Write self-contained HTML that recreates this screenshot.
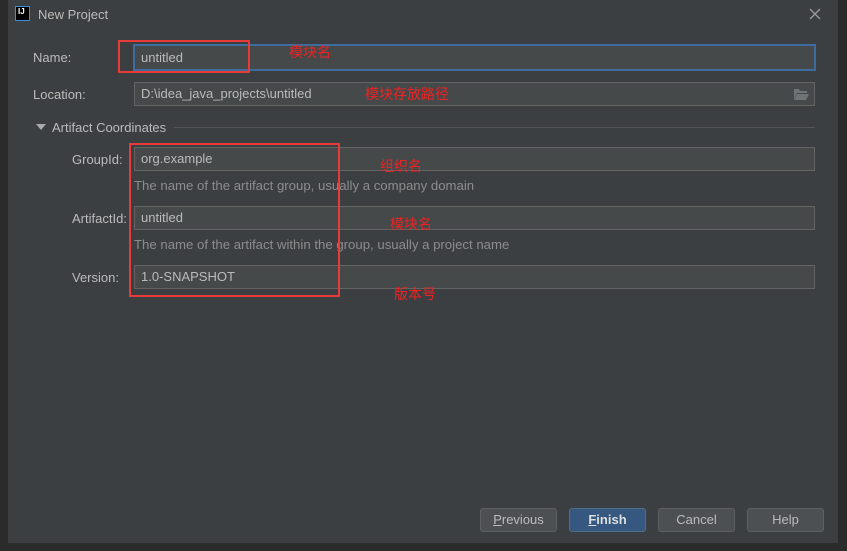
<!DOCTYPE html>
<html><head><meta charset="utf-8"><style>
body{margin:0;width:847px;height:551px;background:#2b2b2b;position:relative;overflow:hidden;font-family:"Liberation Sans","Noto Sans CJK SC",sans-serif;font-size:13px;color:#bbbbbb}
.dlg{position:absolute;left:8px;top:0;width:830px;height:543px;background:#3c3f41}
.a{position:absolute}
.f{position:absolute;background:#45494a;border:1px solid #646464;box-sizing:border-box;padding-left:6px;line-height:22px;color:#bbbbbb}
.lab{position:absolute;color:#bbbbbb}
.hint{position:absolute;color:#8c8c8c;font-size:13.2px}
.red{position:absolute;border:2px solid #e83a3a;box-sizing:border-box}
.rt{position:absolute;color:#ee2222;font-size:14px}
.btn{position:absolute;top:508px;width:77px;height:24px;box-sizing:border-box;border:1px solid #5e6060;border-radius:3px;background:#4c5052;text-align:center;line-height:22px;color:#bbbbbb}
</style></head><body>
<div class="dlg"></div>
<div class="a" style="left:15px;top:6px;width:15px;height:15px;background:#000;border:1px solid #3d8fe0;box-sizing:border-box;color:#fff;font-size:8px;font-weight:bold;line-height:9px;padding-left:2px">IJ</div>
<div class="a" style="left:38px;top:7px;font-size:13px;color:#bbbbbb">New Project</div>
<svg class="a" style="left:809px;top:8px" width="12" height="12"><path d="M1 1L11 11M11 1L1 11" stroke="#9a9a9a" stroke-width="1.3"/></svg>

<div class="lab" style="left:33px;top:50px">Name:</div>
<div class="f" style="left:133px;top:44px;width:683px;height:27px;border:2px solid #3d6c9e;line-height:23px">untitled</div>
<div class="lab" style="left:33px;top:87px">Location:</div>
<div class="f" style="left:134px;top:82px;width:681px;height:24px">D:\idea_java_projects\untitled</div>
<svg class="a" style="left:794px;top:88px" width="15" height="12"><path d="M0 1h5l1 2h7v2H3L0 11z" fill="#6e7376"/><path d="M3 6h12l-3 6H0z" fill="#6e7376"/></svg>

<div class="a" style="left:36px;top:124px;width:0;height:0;border-left:5px solid transparent;border-right:5px solid transparent;border-top:6px solid #aaa"></div>
<div class="lab" style="left:52px;top:120px">Artifact Coordinates</div>
<div class="a" style="left:174px;top:127px;width:641px;height:1px;background:#555"></div>

<div class="lab" style="left:72px;top:152px">GroupId:</div>
<div class="f" style="left:134px;top:147px;width:681px;height:24px">org.example</div>
<div class="hint" style="left:134px;top:178px">The name of the artifact group, usually a company domain</div>
<div class="lab" style="left:72px;top:211px">ArtifactId:</div>
<div class="f" style="left:134px;top:206px;width:681px;height:24px">untitled</div>
<div class="hint" style="left:134px;top:237px">The name of the artifact within the group, usually a project name</div>
<div class="lab" style="left:72px;top:270px">Version:</div>
<div class="f" style="left:134px;top:265px;width:681px;height:24px">1.0-SNAPSHOT</div>

<div class="red" style="left:118px;top:40px;width:132px;height:33px"></div>
<div class="red" style="left:129px;top:143px;width:211px;height:154px"></div>
<div class="rt" style="left:289px;top:42px">模块名</div>
<div class="rt" style="left:365px;top:84px">模块存放路径</div>
<div class="rt" style="left:380px;top:156px">组织名</div>
<div class="rt" style="left:390px;top:214px">模块名</div>
<div class="rt" style="left:394px;top:284px">版本号</div>

<div class="btn" style="left:480px"><u>P</u>revious</div>
<div class="btn" style="left:569px;background:#365880;border-color:#4c708c;color:#ddd;font-weight:bold"><u>F</u>inish</div>
<div class="btn" style="left:658px">Cancel</div>
<div class="btn" style="left:747px">Help</div>
</body></html>
